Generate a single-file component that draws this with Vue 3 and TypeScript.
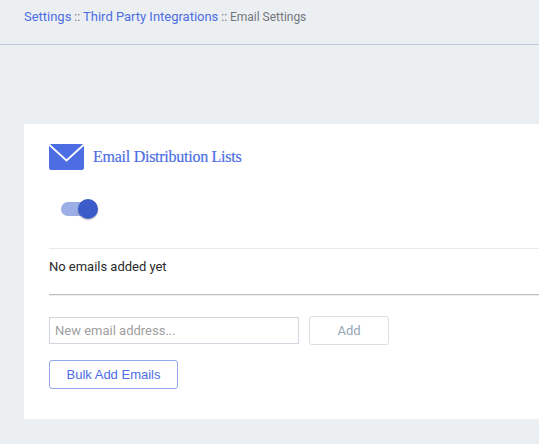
<script setup lang="ts">
import { ref } from 'vue'
const enabled = ref<boolean>(true)
const email = ref<string>('')
</script>

<template>
  <div class="page">
    <nav class="crumbs">
      <a>Settings</a><span> :: </span><a>Third Party Integrations</a><span> :: Email Settings</span>
    </nav>
    <main class="card">
      <header class="title">
        <svg width="35" height="26" viewBox="0 0 35 26">
          <rect width="35" height="26" rx="2.5" fill="#4d6ee3" />
          <path d="M0.5 1 L17.5 16.5 L34.5 1" fill="none" stroke="#fff" stroke-width="1.7" />
        </svg>
        <h1>Email Distribution Lists</h1>
      </header>
      <button class="switch" :class="{ on: enabled }" @click="enabled = !enabled"><i></i></button>
      <p class="empty">No emails added yet</p>
      <div class="row">
        <input v-model="email" placeholder="New email address..." />
        <button class="add">Add</button>
      </div>
      <button class="bulk">Bulk Add Emails</button>
    </main>
  </div>
</template>

<style>
body { background: #ebeff2; overflow: hidden; }
</style>
<style scoped>
.page { height: 444px; overflow: hidden; background: #ebeff2; font-family: Roboto, sans-serif; }
.page * { box-sizing: border-box; }
.crumbs { height: 45px; padding: 9px 24px 0; box-sizing: border-box; border-bottom: 1px solid #c1c8d8; font-size: 12px; line-height: 16px; letter-spacing: -0.015px; color: #73777d; white-space: pre; }
.crumbs a { font-size: 13px; color: #4d6ee3; }
.card { margin: 79px 0 0 24px; height: 295px; padding: 20px 0 0 25px; background: #fff; }
.title { display: flex; align-items: center; gap: 9px; height: 26px; }
h1 { margin: 0; font: 400 16px/20px "Liberation Serif", serif; letter-spacing: -0.26px; color: #4d6ee3; -webkit-text-stroke: 0.2px #4d6ee3; }
button { font-family: inherit; padding: 0; background: #fff; }
.switch { display: flex; align-items: center; width: 34px; height: 14px; margin: 32px 0 0 12px; border: 0; border-radius: 7px; background: #9caee6; }
.switch i { width: 20px; height: 20px; border-radius: 50%; background: #3a5bc8; box-shadow: 0 1px 2px #0004; flex: none; }
.switch.on i { margin-left: 17px; }
.empty { margin: 32px 0 0; height: 47px; padding-top: 10px; border-top: 1px solid #e9e9e9; border-bottom: 1px solid #bfbfbf; box-shadow: 0 1px #eee; font-size: 13px; line-height: 16px; letter-spacing: -0.02px; color: #2b2b2b; }
.row { display: flex; gap: 10px; margin-top: 21px; }
input { width: 250px; height: 27px; margin: 1px 0; padding: 0 5px; border: 1px solid #d0d5de; border-radius: 0; font: 13px Roboto, sans-serif; outline: 0; }
input::placeholder { color: #a0a0a0; }
.add { width: 80px; height: 29px; border: 1px solid #dcdfe1; border-radius: 3px; font-size: 13px; color: #95a5b3; }
.bulk { display: block; width: 129px; height: 29px; margin-top: 15px; border: 1px solid #93a6ea; border-radius: 3px; font: 13px "Liberation Sans", Arial, sans-serif; color: #4d6ee3; }
</style>
